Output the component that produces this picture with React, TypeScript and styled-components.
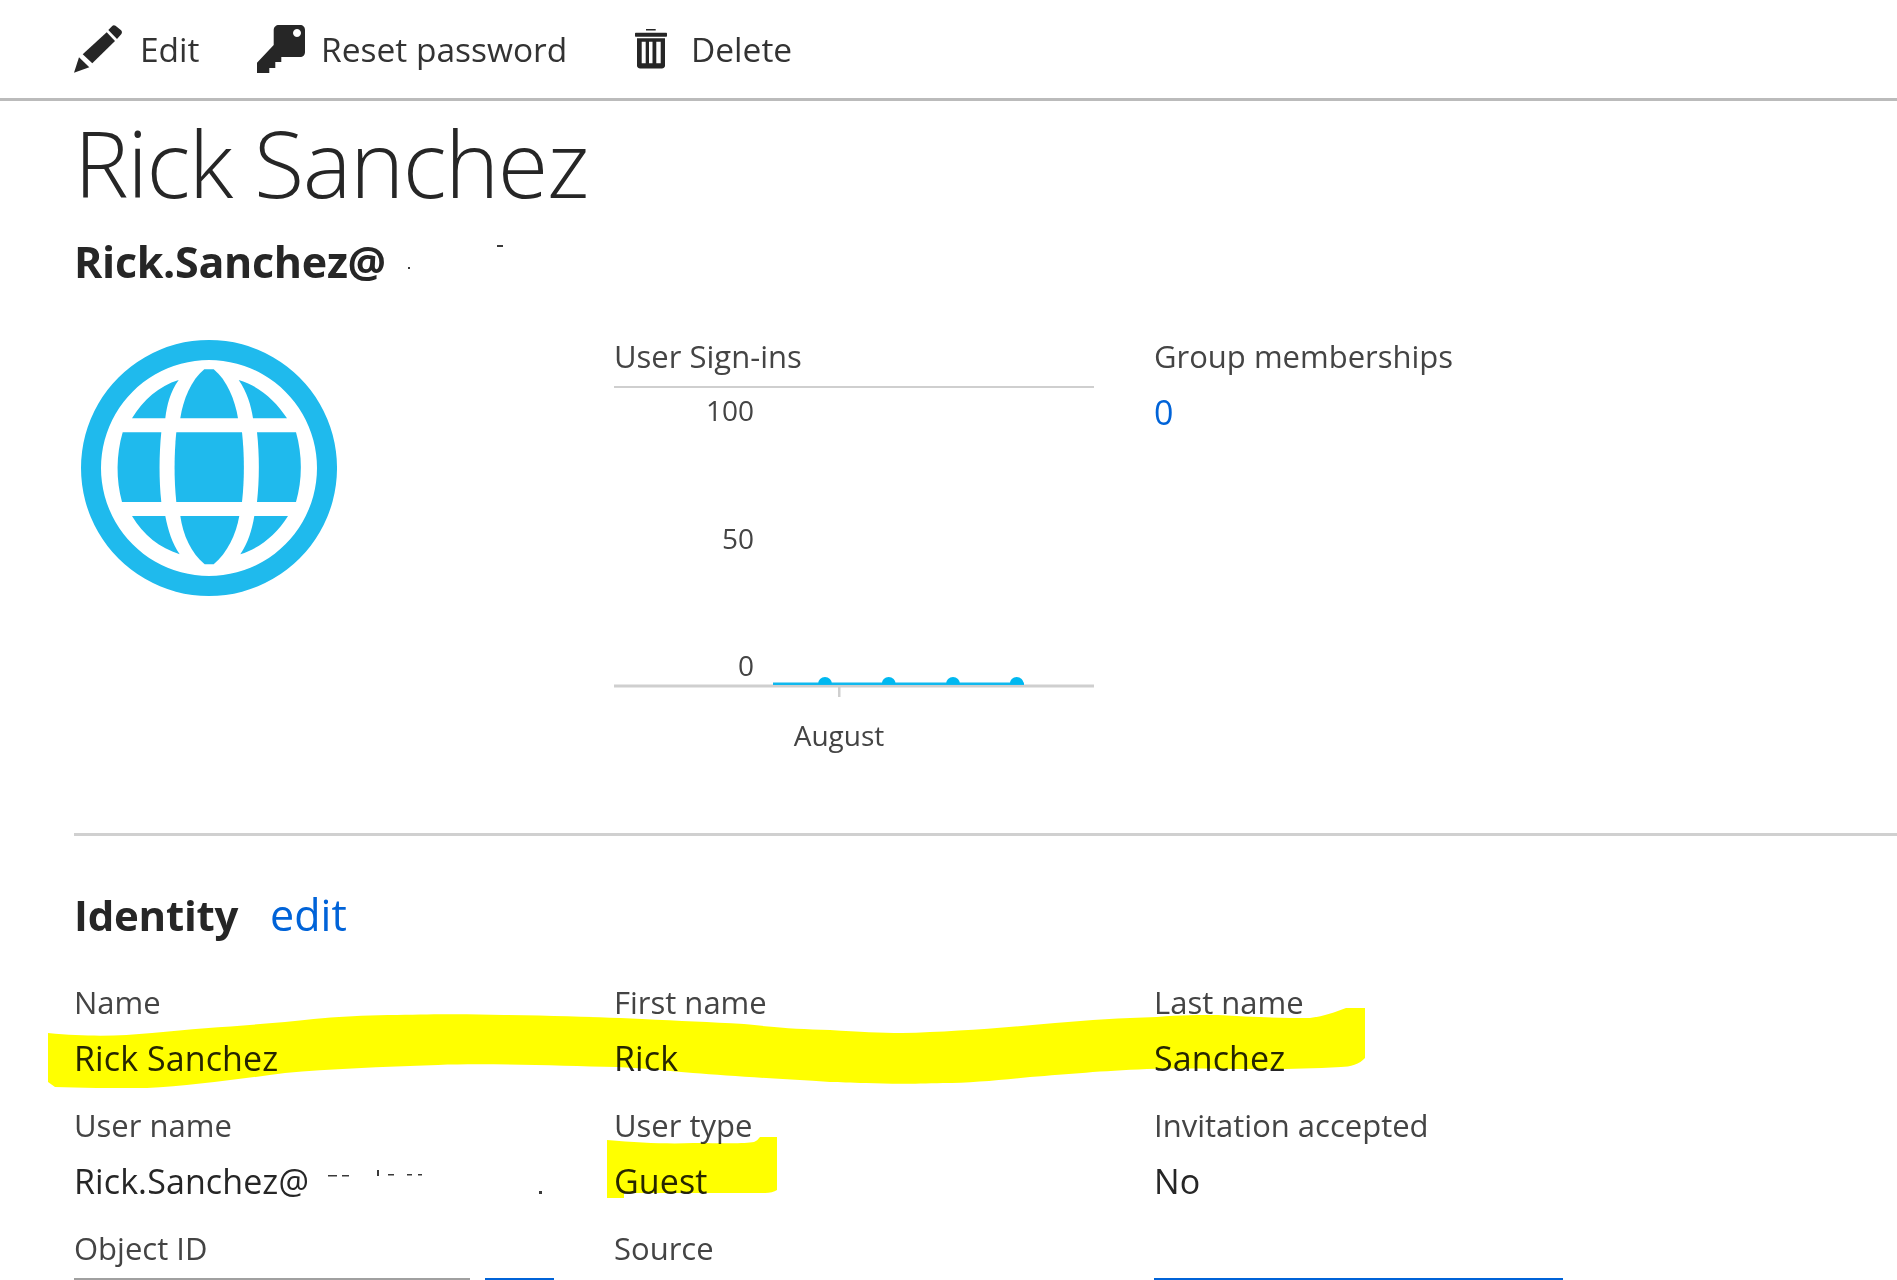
import React from "react";
import styled, { createGlobalStyle } from "styled-components";

const Global = createGlobalStyle`
  html, body { margin: 0; padding: 0; background: #fff; }
  body { font-family: "Open Sans", "Noto Sans", sans-serif; color: #262626; }
`;

const Page = styled.div`
  position: relative;
  width: 1897px;
  height: 1280px;
  overflow: hidden;
  background: #fff;
`;

const Toolbar = styled.div`
  display: flex;
  align-items: center;
  height: 98px;
  padding-left: 74px;
  border-bottom: 3px solid #bbbbbb;
`;

const ToolButton = styled.div<{ $w: number; $gap: number }>`
  display: flex;
  align-items: center;
  gap: ${(p) => p.$gap}px;
  width: ${(p) => p.$w}px;
  font-size: 33.5px;
  color: #333;
  svg { flex: none; fill: #262626; }
`;

const Content = styled.div`
  padding-left: 74px;
`;

const Title = styled.h1`
  margin: 2px 0 0;
  font-size: 92px;
  font-weight: 300;
  line-height: 120px;
  letter-spacing: -1.5px;
  color: #262626;
`;

const Email = styled.div`
  margin-top: 13px;
  font-size: 43px;
  font-weight: 700;
  line-height: 52px;
  letter-spacing: -0.3px;
  color: #262626;
`;

const Grid = styled.div`
  display: grid;
  grid-template-columns: 540px 540px 1fr;
`;

const Summary = styled(Grid)`
  margin-top: 46px;
  height: 499px;
  border-bottom: 3px solid #d0d0d0;
`;

const GlobeCell = styled.div`
  padding: 6px 0 0 7px;
`;

const ChartColumn = styled.div`
  width: 480px;
`;

const SummaryHeading = styled.div`
  font-size: 31px;
  line-height: 44px;
  color: #444;
`;

const ChartHeading = styled(SummaryHeading)`
  border-bottom: 2px solid #cfcfcf;
  height: 52px;
`;

const Chart = styled.svg`
  display: block;
  overflow: visible;
  text {
    font-family: "Open Sans", "Noto Sans", sans-serif;
    font-size: 28px;
    fill: #444;
  }
`;

const GroupCount = styled.div`
  margin-top: 12px;
  font-size: 34px;
  line-height: 44px;
  color: #0063d8;
`;

const SectionHead = styled.div`
  display: flex;
  align-items: baseline;
  gap: 32px;
  margin-top: 49px;
  height: 60px;
`;

const SectionTitle = styled.span`
  font-size: 42px;
  font-weight: 700;
  letter-spacing: -0.25px;
  color: #262626;
`;

const SectionLink = styled.span`
  font-size: 43px;
  color: #0063d8;
`;

const FieldGrid = styled(Grid)`
  margin-top: 34px;
  row-gap: 11px;
`;

const Field = styled.div``;

const Label = styled.div`
  font-size: 31px;
  line-height: 46px;
  color: #444;
`;

const Value = styled.div`
  font-size: 34px;
  line-height: 66px;
  color: #262626;
  letter-spacing: 0.1px;
`;

const Overlay = styled.svg`
  position: absolute;
  left: 0;
  top: 0;
  pointer-events: none;
  mix-blend-mode: multiply;
`;

const BottomLine = styled.div<{ $x: number; $w: number; $c: string }>`
  position: absolute;
  left: ${(p) => p.$x}px;
  width: ${(p) => p.$w}px;
  bottom: 0;
  height: 2px;
  background: ${(p) => p.$c};
`;

const Pencil = () => (
  <svg width="48" height="48" viewBox="0 0 48 48">
    <path d="M0 47.700L5 32.300L15.300 42.300Z" />
    <path d="M8.700 29.300L32.700 7.300L41 16L18.300 38.300Z" />
    <path d="M34.300 5L38 1.200C39 0 40.500 0 41.500 .8L46.800 5C48.200 6.200 48.300 8 47.200 9.200L43 14Z" />
  </svg>
);

const Key = () => (
  <svg width="48" height="48" viewBox="0 0 48 48">
    <path
      fillRule="evenodd"
      d="M22 0H43C46 0 48 2 48 5V27C48 30 46 32 43 32H24.300V37H18.300V43H12.300V48H0V37.700L16.700 20V5C16.700 2 19 0 22 0ZM40 4A4 4 0 1 0 40.010 4Z"
    />
  </svg>
);

const Trash = () => (
  <svg width="32" height="40" viewBox="0 0 32 40">
    <path
      fillRule="evenodd"
      d="M11 0H20.700V1.500H11ZM1 3.700H31C31.600 3.700 32 4.100 32 4.700V6.700C32 7.300 31.600 7.700 31 7.700H1C.4 7.700 0 7.300 0 6.700V4.700C0 4.100 .4 3.700 1 3.700ZM2 9.300H30V37C30 38.600 28 39.600 25 39.600H7C4 39.600 2 38.600 2 37ZM6.700 12.700V34.300H10.700V12.700ZM14 12.700V34.300H17.500V12.700ZM21.300 12.700V34.300H25.700V12.700Z"
    />
  </svg>
);

const Globe = () => (
  <svg width="256" height="256" viewBox="0 0 256 256" fill="#1fbaed">
    <path fillRule="evenodd" d="M128 0A128 128 0 1 0 128.010 0ZM128 20A108 108 0 1 1 127.990 20Z" />
    <path d="M123.300 29.300H132.700C146 40 154 60 157 78.300H99.300C102 60 110 40 123.300 29.300Z" />
    <path d="M97.700 40C89 52 86 65 84.300 78.300H51C62 60 78 46 97.700 40Z" />
    <path d="M157.700 40C166 52 170 65 172 78.300H206C194 60 178 46 157.700 40Z" />
    <path d="M41.700 92.300H80.300C78 115 78 140 80.300 162H41C35 140 35 115 41.700 92.300Z" />
    <path d="M95.300 92.300H161C163.500 115 163.500 140 161 162H95.300C93 140 93 115 95.300 92.300Z" />
    <path d="M176 92.300H215C221.500 115 221.500 140 215 162H176C178.500 140 178.500 115 176 92.300Z" />
    <path d="M51 176H84.300C87 190 91 203 98.700 214.300C79 208 62 195 51 176Z" />
    <path d="M99.300 176H158.300C155 195 146 213 132.700 224.300H123.700C110 213 102 195 99.300 176Z" />
    <path d="M173.300 176H207C195 195 179 208 159.300 214.300C167 203 171 190 173.300 176Z" />
  </svg>
);

const dots = [211, 274.7, 339, 402.7];

export default function App() {
  return (
    <Page>
      <Global />
      <Toolbar>
        <ToolButton $w={183} $gap={18}>
          <Pencil />
          Edit
        </ToolButton>
        <ToolButton $w={378} $gap={16}>
          <Key />
          Reset password
        </ToolButton>
        <ToolButton $w={200} $gap={24}>
          <Trash />
          Delete
        </ToolButton>
      </Toolbar>
      <Content>
        <Title>Rick Sanchez</Title>
        <Email>Rick.Sanchez@</Email>
        <Summary>
          <GlobeCell>
            <Globe />
          </GlobeCell>
          <ChartColumn>
            <ChartHeading>User Sign-ins</ChartHeading>
            <Chart width="480" height="360" viewBox="0 0 480 360">
              <text x="140" y="33" textAnchor="end">100</text>
              <text x="140" y="161" textAnchor="end">50</text>
              <text x="140" y="288" textAnchor="end">0</text>
              <text x="225" y="358" textAnchor="middle">August</text>
              <rect x="0" y="296.500" width="480" height="3" fill="#cfcfcf" />
              <rect x="224" y="299" width="2.500" height="10" fill="#cfcfcf" />
              <rect x="159" y="294.500" width="251" height="2.500" fill="#10b8ee" />
              {dots.map((x) => (
                <path key={x} d={`M${x - 7} 296a7 7 0 0 1 14 0z`} fill="#00b8f0" />
              ))}
            </Chart>
          </ChartColumn>
          <div>
            <SummaryHeading>Group memberships</SummaryHeading>
            <GroupCount>0</GroupCount>
          </div>
        </Summary>
        <SectionHead>
          <SectionTitle>Identity</SectionTitle>
          <SectionLink>edit</SectionLink>
        </SectionHead>
        <FieldGrid>
          <Field><Label>Name</Label><Value>Rick Sanchez</Value></Field>
          <Field><Label>First name</Label><Value>Rick</Value></Field>
          <Field><Label>Last name</Label><Value>Sanchez</Value></Field>
          <Field><Label>User name</Label><Value>Rick.Sanchez@</Value></Field>
          <Field><Label>User type</Label><Value>Guest</Value></Field>
          <Field><Label>Invitation accepted</Label><Value>No</Value></Field>
          <Field><Label>Object ID</Label></Field>
          <Field><Label>Source</Label></Field>
        </FieldGrid>
      </Content>
      <BottomLine $x={74} $w={396} $c="#a0a0a0" />
      <BottomLine $x={485} $w={69} $c="#0063d8" />
      <BottomLine $x={1154} $w={409} $c="#0063d8" />
      <Overlay width="1897" height="1280" viewBox="0 0 1897 1280">
        <path
          fill="#ffff00"
          d="M48 1033C90 1037 120 1036 152 1033C200 1028 240 1026 285 1022C330 1017 360 1015 397 1015C440 1014 470 1014 504 1015C560 1016 600 1017 642 1019C680 1021 710 1022 744 1024C780 1028 800 1029 830 1030C860 1032 880 1033 902 1033C950 1032 1000 1028 1055 1023C1090 1020 1120 1018 1157 1017C1180 1015 1200 1015 1218 1015C1250 1017 1280 1018 1310 1018C1325 1016 1335 1012 1346 1008L1365 1008L1365 1058C1360 1064 1350 1067 1341 1067C1310 1069 1280 1069 1259 1069C1220 1069 1180 1068 1147 1069C1100 1071 1070 1074 1030 1077C1000 1080 970 1083 943 1083C910 1084 890 1084 866 1083C850 1083 840 1082 830 1082C780 1079 730 1076 693 1073C660 1070 640 1068 617 1067C560 1066 490 1063 438 1065C380 1067 330 1069 285 1073C240 1079 190 1086 147 1088C110 1088 80 1088 55 1087L48 1082Z"
        />
        <path
          fill="#ffff00"
          d="M607 1140C640 1143 670 1144 693 1143C720 1143 745 1144 754 1142C757 1141 758 1139 760 1137L777 1137L777 1190C774 1192 770 1193 765 1193L624 1193L624 1198L607 1198Z"
        />
        <g fill="#3a3a3a">
          <rect x="497" y="245" width="6" height="2" />
          <rect x="408" y="267" width="2" height="2" />
          <rect x="328" y="1175" width="9" height="1.500" />
          <rect x="342" y="1175" width="7" height="1.500" />
          <rect x="377" y="1170" width="2" height="6" />
          <rect x="388" y="1174" width="6" height="1.500" />
          <rect x="407" y="1174" width="5" height="1.500" />
          <rect x="418" y="1174" width="4" height="1.500" />
          <rect x="539" y="1191" width="3" height="3" />
        </g>
      </Overlay>
    </Page>
  );
}
